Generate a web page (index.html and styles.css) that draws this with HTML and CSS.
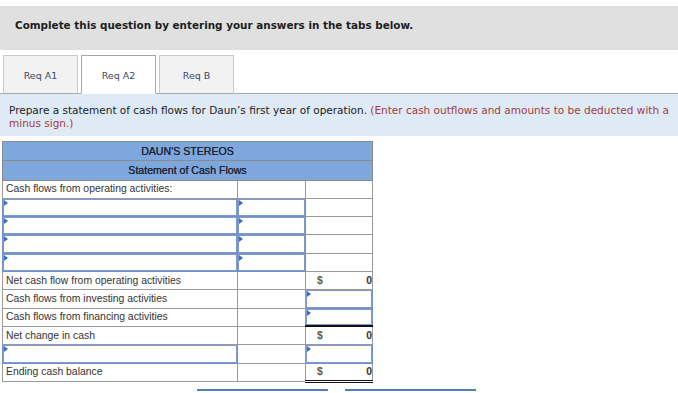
FILE: index.html
```html
<!DOCTYPE html>
<html lang="en">
<head>
    <meta charset="UTF-8">
    <title>Req A2 - statement of cash flows</title>
    <link rel="stylesheet" href="styles.css">
</head>
<body>
    <div class="prompt">Complete this question by entering your answers in the tabs below.</div>

    <div class="tabs">
        <div class="tab">Req A1</div>
        <div class="tab active">Req A2</div>
        <div class="tab">Req B</div>
    </div>

    <div class="instructions">
        Prepare a statement of cash flows for Daun’s first year of operation.
        <span class="hint">(Enter cash outflows and amounts to be deducted with a minus sign.)</span>
    </div>

    <table class="sheet">
        <colgroup>
            <col class="c-label">
            <col class="c-mid">
            <col class="c-total">
        </colgroup>
        <tr class="head"><th colspan="3">DAUN'S STEREOS</th></tr>
        <tr class="head"><th colspan="3">Statement of Cash Flows</th></tr>
        <tr><td>Cash flows from operating activities:</td><td></td><td></td></tr>
        <tr><td class="entry"><i></i></td><td class="entry"><i></i></td><td></td></tr>
        <tr><td class="entry"><i></i></td><td class="entry"><i></i></td><td></td></tr>
        <tr><td class="entry"><i></i></td><td class="entry"><i></i></td><td></td></tr>
        <tr><td class="entry"><i></i></td><td class="entry"><i></i></td><td></td></tr>
        <tr><td>Net cash flow from operating activities</td><td></td><td class="amt"><b>$</b>0</td></tr>
        <tr><td>Cash flows from investing activities</td><td></td><td class="entry"><i></i></td></tr>
        <tr><td>Cash flows from financing activities</td><td></td><td class="entry sum"><i></i></td></tr>
        <tr><td>Net change in cash</td><td></td><td class="amt"><b>$</b>0</td></tr>
        <tr><td class="entry"><i></i></td><td></td><td class="entry"><i></i></td></tr>
        <tr><td>Ending cash balance</td><td></td><td class="amt total"><b>$</b>0</td></tr>
    </table>

    <div class="nav">
        <div class="nav-btn"></div>
        <div class="nav-btn"></div>
    </div>
</body>
</html>
```

FILE: styles.css
```css
body{
    margin: 0;
    font-family: "DejaVu Sans", Verdana, sans-serif;
    color: #222;
}
.prompt{
    margin-top: 6px;
    height: 44px;
    box-sizing: border-box;
    padding: 13px 0 0 15px;
    background-color: #e0e0e0;
    font-size: 10.4px;
    font-weight: bold;
    color: #1c1c1c;
}
.tabs{
    display: flex;
    gap: 3px;
    margin-top: 5px;
    padding-left: 3px;
    border-bottom: 1px solid #a8a8a8;
}
.tab{
    width: 75px;
    height: 39px;
    box-sizing: border-box;
    margin-bottom: -1px;
    border: 1px solid #c9c9c9;
    border-bottom-color: #a8a8a8;
    background-color: #f2f2f2;
    font-size: 9.5px;
    line-height: 39px;
    text-align: center;
    color: #3a4a66;
}
.tab.active{
    background-color: #fff;
    border-color: #a8a8a8;
    border-bottom-color: #fff;
}
.instructions{
    padding: 10px 9px 0;
    height: 42px;
    box-sizing: border-box;
    background-color: #dfeaf7;
    font-size: 10.5px;
    line-height: 13px;
    color: #222;
}
.hint{
    color: #a33a3a;
}
.sheet{
    margin: 5px 0 0 2px;
    border-collapse: collapse;
    font-family: "Liberation Sans", Arial, sans-serif;
    font-size: 10.4px;
    color: #333;
}
.c-label{ width: 235px; }
.c-mid{ width: 68px; }
.c-total{ width: 67px; }
.sheet tr{
    height: 18.3px;
}
.sheet tr.head{
    height: 19.3px;
}
.sheet th{
    padding: 0;
    border: 1px solid #8a8a8a;
    background-color: #7ea7dd;
    font-size: 10.6px;
    font-weight: normal;
    line-height: 12px;
    text-shadow: 0 0 0.5px #222;
    color: #1d2433;
}
.sheet td{
    padding: 0 0 0 3px;
    border: 1px solid #9a9a9a;
    line-height: 12px;
    background-color: #fff;
}
.sheet td.entry{
    position: relative;
    border-color: #7190c7;
    box-shadow: inset 0 0 0 1px #7d9bd0;
}
.entry i{
    position: absolute;
    left: 1px;
    top: 1px;
    border-top: 3px solid transparent;
    border-bottom: 3px solid transparent;
    border-left: 4px solid #3d6cc0;
}
.sheet td.sum{
    border-bottom: 2px solid #111;
}
.amt{
    padding-right: 4px;
    text-align: right;
    font-weight: bold;
    color: #333;
}
.amt b{
    float: left;
    padding-left: 8px;
    color: #6b5a2c;
}
.sheet td.total{
    border-bottom: 3px double #111;
}
.nav{
    display: flex;
    gap: 17px;
    margin: 6px 0 0 197px;
}
.nav-btn{
    width: 131px;
    height: 30px;
    border-top: 2px solid #4c7fc0;
    background-color: #fff;
}
```
